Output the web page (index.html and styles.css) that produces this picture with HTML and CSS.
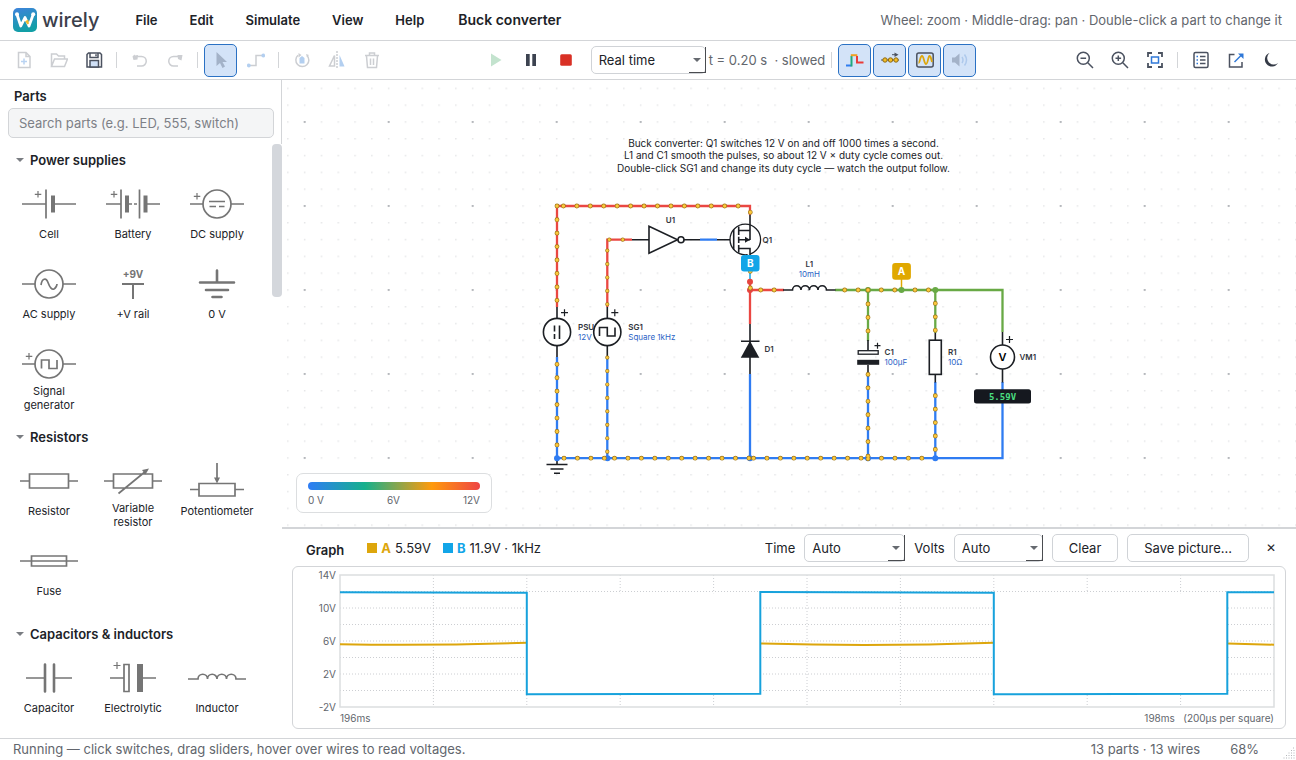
FILE: index.html
```html
<!DOCTYPE html>
<html lang="en">
<head>
<meta charset="utf-8">
<title>Buck converter - wirely</title>
<link rel="stylesheet" href="styles.css">
</head>
<body class="app">
<header class="menubar">
  <div class="brand">
    <svg class="logo" viewBox="0 0 24 24" aria-hidden="true">
      <defs><linearGradient id="lg" x1="0" y1="0" x2="0.3" y2="1"><stop offset="0" stop-color="#3f83dc"/><stop offset="1" stop-color="#129fa6"/></linearGradient></defs>
      <rect width="24" height="24" rx="5" fill="url(#lg)"/>
      <path d="M4 6.5 7.8 18 12 9.5 16 18 20.2 6.5" fill="none" stroke="#fff" stroke-width="2.8" stroke-linejoin="round" stroke-linecap="round"/>
      <circle cx="4" cy="6.3" r="2" fill="#fff"/><circle cx="20.2" cy="6.3" r="2" fill="#fff"/>
      <path d="M12.2 13.2 15.2 11.4 16 15.6 14.4 16.4z" fill="#f2b92c"/>
    </svg>
    <span class="brand-name">wirely</span>
  </div>
  <nav class="menus">
    <button class="menu">File</button><button class="menu">Edit</button><button class="menu">Simulate</button><button class="menu">View</button><button class="menu">Help</button>
  </nav>
  <h1 class="doc-title">Buck converter</h1>
  <p class="hint">Wheel: zoom · Middle-drag: pan · Double-click a part to change it</p>
</header>

<div class="toolbar" role="toolbar">
  <button class="tool dim" aria-label="New"><svg viewBox="0 0 18 18"><path d="M3.5 1.5h7.5l4 4v11h-11.5zM11 1.5v4h4"/><path class="blue" d="M9 7.5v6M6 10.5h6"/></svg></button>
  <button class="tool dim" aria-label="Open"><svg viewBox="0 0 18 18"><path d="M1.5 15.500V3h5l2 2h6v3M1.500 15.500 4.500 8h13L14.500 15.500z"/></svg></button>
  <button class="tool" aria-label="Save"><svg viewBox="0 0 18 18"><path d="M2 3.500 3.500 2h11.500l1.500 1.500v12.500H2z"/><path d="M5 2v4.500h8V2M11 3.200v2"/><path fill="#cfe0f7" d="M5 16v-6.500h8.500V16z"/></svg></button>
  <span class="sep"></span>
  <button class="tool dim" aria-label="Undo"><svg viewBox="0 0 18 18"><path d="M4.500 5.500h6a4.500 4.500 0 0 1 0 9.500H6"/><path class="solid" d="M1.500 5.500 3.500 3.500l.5 1 3-.5-.5 4.500-4 .5z"/></svg></button>
  <button class="tool dim" aria-label="Redo"><svg viewBox="0 0 18 18"><path d="M13.500 5.500h-6a4.500 4.500 0 0 0 0 9.500H12"/><path class="solid" d="M16.500 4 11.500 4l.5 4 3.500 1.500z"/></svg></button>
  <span class="sep"></span>
  <button class="tool on dim" aria-label="Select"><svg viewBox="0 0 18 18"><path class="ptr" d="M4.500 1v14l3.500-3 2.500 5 2.500-1.500-2.500-4.500h4.500z"/></svg></button>
  <button class="tool dim" aria-label="Wire"><svg viewBox="0 0 18 18"><path d="M2 14.500h7V4.500h7.500"/><circle class="bluefill" cx="1.800" cy="14.500" r="1.900"/><circle class="bluefill" cx="16.300" cy="4.500" r="1.900"/></svg></button>
  <span class="sep"></span>
  <button class="tool dim" aria-label="Rotate"><svg viewBox="0 0 18 18"><path d="M5 4.200A6.500 6.500 0 1 0 14 4.500"/><path class="solid" d="M5.500 2 8.500 4 5.500 6.500zM13 3l3 1-2 2z"/><path class="bluefill" d="M6.500 7l2.500-2 2.500 2v5.500h-5z"/></svg></button>
  <button class="tool dim" aria-label="Mirror"><svg viewBox="0 0 18 18"><path d="M6.500 4.500v10.500H1.500z"/><path stroke-dasharray="2 1" d="M9 0v18"/><path class="bluefill" d="M11.500 4v11.500h5z"/></svg></button>
  <button class="tool dim" aria-label="Delete"><svg viewBox="0 0 18 18"><path d="M2 4.500h14M6.500 4V2h5v2M3.500 5l1 11.500h9l1-11.500M7.500 7.500v6.500M10.500 7.500v6.500"/></svg></button>
  <span class="spacer"></span>
  <button class="tool" aria-label="Run"><svg viewBox="0 0 18 18"><path fill="#c3e3ce" stroke="none" d="M4 2.500v13l10.500-6.500z"/></svg></button>
  <button class="tool" aria-label="Pause"><svg viewBox="0 0 18 18"><path fill="#3c4350" stroke="none" d="M4 3h3.700v12H4zM10.300 3H14v12h-3.700z"/></svg></button>
  <button class="tool" aria-label="Stop"><svg viewBox="0 0 18 18"><rect x="3.200" y="3.200" width="11.600" height="11.600" rx="1.500" fill="#d93025" stroke="none"/></svg></button>
  <span class="select speed"><select aria-label="Speed"><option>Real time</option></select></span>
  <span class="clock">t = 0.20 s &nbsp;· slowed</span>
  <span class="sep"></span>
  <button class="tool on" aria-label="Voltage colours"><svg viewBox="0 0 18 18" class="fat"><path stroke="#2f7df0" d="M0 14.500h5.500"/><path stroke="#20a97c" d="M5.500 15.500V5"/><path stroke="#f0a020" d="M4.800 4.200h6.500"/><path stroke="#ea3c38" d="M11 5v6.500h6.500"/></svg></button>
  <button class="tool on" aria-label="Current dots"><svg viewBox="0 0 18 18"><path stroke-width="1" d="M0 9h18M11 3.700h5"/><path class="solid" d="M13.500 1.500l4 2.200-4 2.200z"/><g fill="#f5bd23" stroke="#8a6a1a" stroke-width="1"><circle cx="4" cy="9" r="2.200"/><circle cx="9.500" cy="9" r="2.200"/><circle cx="15" cy="9" r="2.200"/></g></svg></button>
  <button class="tool on" aria-label="Graph"><svg viewBox="0 0 18 18"><rect x=".8" y="2" width="16.400" height="14" rx="2"/><path stroke="#dda60c" stroke-width="1.800" d="M2.500 12C4 12 4 5 6 5s2 8 4 8 2-8 3.500-8 1.500 3 2.500 6"/></svg></button>
  <button class="tool on" aria-label="Sound"><svg viewBox="0 0 18 18"><path fill="#a3b2c8" stroke="none" d="M1 6.500h3l4.500-4v13l-4.500-4H1z"/><path class="wave" d="M11 6q2 3 0 6M13.500 3.500q4 5.500 0 11"/></svg></button>
  <span class="spacer"></span>
  <button class="tool" aria-label="Zoom out"><svg viewBox="0 0 18 18"><circle cx="7.300" cy="7.300" r="6"/><path d="M11.800 11.800 17 17M4.500 7.300h5.600"/></svg></button>
  <button class="tool" aria-label="Zoom in"><svg viewBox="0 0 18 18"><circle cx="7.300" cy="7.300" r="6"/><path d="M11.800 11.800 17 17M4.500 7.300h5.600M7.300 4.500v5.600"/></svg></button>
  <button class="tool" aria-label="Zoom to fit"><svg viewBox="0 0 18 18"><path stroke-width="1.800" d="M2 6V2h4M12 2h4v4M16 12v4h-4M6 16H2v-4"/><rect class="act" x="5.500" y="6" width="7" height="6"/></svg></button>
  <span class="sep"></span>
  <button class="tool" aria-label="Parts list"><svg viewBox="0 0 18 18"><rect x="2" y="1.500" width="14" height="15" rx="1.500"/><path class="act" d="M4.500 5.500h1.500M4.500 9h1.500M4.500 12.500h1.500"/><path d="M8 5.500h5.500M8 9h5.500M8 12.500h5.500"/></svg></button>
  <button class="tool" aria-label="Share"><svg viewBox="0 0 18 18"><path d="M7.500 3.500H2.500v12.500h12.500V11"/><path class="act" d="M7.500 11 14.500 4"/><path class="actfill" d="M11 2.500h5.500v5.500z"/></svg></button>
  <button class="tool" aria-label="Dark mode"><svg viewBox="0 0 18 18"><path fill="#343a46" stroke="none" d="M7.500 2a7 7 0 1 0 8.500 10A6.200 6.200 0 0 1 7.500 2z"/></svg></button>
</div>

<main class="work">
<aside class="sidebar">
  <div class="side-head">
    <label class="side-title" for="search">Parts</label>
    <input class="search" id="search" type="search" placeholder="Search parts (e.g. LED, 555, switch)">
  </div>
  <div class="side-scroll">
    <section class="group">
      <h2 class="group-title">Power supplies</h2>
      <div class="parts">
        <button class="part"><svg viewBox="-30 -22 60 44"><path d="M-27 0h24M-3-14.500v29M5 0h22"/><path class="plus" d="M-11-13v6.500M-14.200-9.700h6.500"/><path stroke-width="4" d="M4-8.500v17"/></svg><span>Cell</span></button>
        <button class="part"><svg viewBox="-30 -22 60 44"><path d="M-27 0h15M-12-14.500v29M-5 0h4M1 0h3M6.500-14.500v29M13 0h14"/><path class="plus" d="M-19-13v6.500M-22.200-9.700h6.500"/><path stroke-width="4" d="M-6-8.500v17M12.500-8.500v17"/></svg><span>Battery</span></button>
        <button class="part"><svg viewBox="-30 -22 60 44"><circle r="14"/><path d="M-27 0h13M14 0h13M-8-2.500h16M-7.500 2.500h6.500M2 2.500h5.500"/><path class="plus" d="M-20-11v6.500M-23.200-7.700h6.500"/></svg><span>DC supply</span></button>
        <button class="part"><svg viewBox="-30 -22 60 44"><circle r="14"/><path d="M-27 0h13M14 0h13M-8 1C-7-5.500-3-7-1-1.500S3 6 5 5 8 1 8 0"/></svg><span>AC supply</span></button>
        <button class="part"><svg viewBox="-30 -22 60 44"><text class="rail" x="0" y="-6">+9V</text><path stroke-width="2" d="M-11 0h22M0 0v15"/></svg><span>+V rail</span></button>
        <button class="part"><svg viewBox="-30 -22 60 44"><path class="heavy" d="M0-13.500V-2M-17-1.500h34M-11 6h22M-4.500 13h9"/></svg><span>0 V</span></button>
        <button class="part"><svg viewBox="-30 -22 60 44"><circle r="14"/><path d="M-27 0h13M14 0h13M-7.500 4.500v-8.500H0v8.500h8v-8.500"/><path class="plus" d="M-20-11v6.500M-23.200-7.700h6.500"/></svg><span>Signal generator</span></button>
      </div>
    </section>
    <section class="group">
      <h2 class="group-title">Resistors</h2>
      <div class="parts">
        <button class="part"><svg viewBox="-30 -22 60 44"><path d="M-29 0h9.500M19.500 0h9.500M-19.500-7h39V7h-39z"/></svg><span>Resistor</span></button>
        <button class="part"><svg viewBox="-30 -22 60 44"><path d="M-29 0h9.500M19.500 0h9.500M-19.500-7h39V7h-39zM-14.500 12.500 13-10"/><path class="tip" d="M16-12.500 12.500-6.500 9-11z"/></svg><span>Variable resistor</span></button>
        <button class="part"><svg viewBox="-30 -22 60 44"><path d="M-27 8.500h9M18 8.500h9M-18 2.500h36v12.500h-36zM0-18V0"/><path class="tip" d="M0 2.500-3-3.500h6z"/></svg><span>Potentiometer</span></button>
        <button class="part"><svg viewBox="-30 -22 60 44"><path d="M-29 0h58M-17.500-5h35V5h-35z"/></svg><span>Fuse</span></button>
      </div>
    </section>
    <section class="group">
      <h2 class="group-title">Capacitors &amp; inductors</h2>
      <div class="parts">
        <button class="part"><svg viewBox="-30 -22 60 44"><path d="M-23 0h19M5 0h18"/><path class="heavy" d="M-4-13.500v27M5-13.500v27"/></svg><span>Capacitor</span></button>
        <button class="part"><svg viewBox="-30 -22 60 44"><path d="M-23 0h14M10 0h13M-9-13.500h5v27h-5z"/><path class="plus" d="M-16-16v7M-19.500-12.500h7"/><path class="tip" d="M4-14h6v28H4z"/></svg><span>Electrolytic</span></button>
        <button class="part"><svg viewBox="-30 -22 60 44"><path d="M-29 1h10a4.750 4.750 0 0 1 9.500 0a4.750 4.750 0 0 1 9.500 0a4.750 4.750 0 0 1 9.500 0a4.750 4.750 0 0 1 9.500 0h10"/></svg><span>Inductor</span></button>
      </div>
    </section>
    <div class="thumb"></div>
  </div>
</aside>

<div class="stage">
<div class="canvas">
<svg class="schematic" role="img" aria-label="Buck converter circuit">
  <defs>
    <pattern id="minor" x="287.100" y="87.600" width="16.800" height="16.800" patternUnits="userSpaceOnUse"><rect x=".2" y=".2" width="1.200" height="1.200" fill="#d6d8db"/></pattern>
    <pattern id="major" x="303.700" y="121" width="84" height="84" patternUnits="userSpaceOnUse"><rect width="1.900" height="1.900" fill="#b3b6ba"/></pattern>
    <g id="flow">
      <path d="M563.400 206H740M557 206v.01M750.300 212.300v.01M557 219.700V301M557 364.300V446M564 458.200H605M614.500 458.200H750M753.500 458.200H862M868 456.200v.01M868 458.800v.01M881.500 458.200H923M760.700 290H776M844.700 290H860M868 290v.01M881.300 290H896M915 290H930M750.300 271.300v.01M750.300 288v.01M868 304V332M868 374.400V442.500M935.300 303.400V331M935.300 395.700V450.500"/>
    </g>
    <g id="flow2"><path d="M609.300 239.700H624M607.300 250.600V305.500M607.300 357.600V452.500"/></g>
  </defs>
  <g transform="translate(-282 -80)">
    <rect x="282" y="80" width="4000" height="3000" fill="url(#minor)"/>
    <rect x="282" y="80" width="4000" height="3000" fill="url(#major)"/>
    <g class="note">
      <text x="783.500" y="147">Buck converter: Q1 switches 12 V on and off 1000 times a second.</text>
      <text x="783.500" y="159">L1 and C1 smooth the pulses, so about 12 V × duty cycle comes out.</text>
      <text x="783.500" y="172">Double-click SG1 and change its duty cycle — watch the output follow.</text>
    </g>
    <g class="wire">
      <path class="red" d="M557 307V206H750V215M607.300 307V239.700H632M750 282V324M750 290H784"/>
      <path class="blu" d="M557 357V458.200H1002.500V382M607.300 357V458M700 239.700H717M750 374V458M868 373V458M935.300 382V458"/>
      <path class="grn" d="M835 290H1002.500V332M868 290V341M935.300 290V333"/>
      <path stroke="#12a5e8" stroke-width="1.500" d="M750 271V281"/>
      <path stroke="#e0a800" stroke-width="1.500" d="M901.500 279V290"/>
    </g>
    <text class="ref" x="578" y="330">PSU</text><text class="val" x="578" y="340">12V</text>
    <g class="sym">
      <path d="M557 307V318M557 346V357M607.300 307V318M607.300 346V357M632 239.700H649M684 239.700H700M717 239.700H733M557 458V464"/>
      <circle cx="557" cy="332" r="13.600"/><circle cx="607.300" cy="332" r="13.600"/>
      <path d="M554.500 325.500v6M554.500 334v5M559.500 325.500V339"/>
      <path class="plus" d="M561 312.700h7M564.500 309.200v7M611.300 312.700h7M614.800 309.200v7M874.500 345.700h6M877.500 342.700v6M1006 339.500h7M1009.500 336v7"/>
      <path d="M599.500 336V327.500H607.300V336H615V327.500"/>
      <path d="M649 226.200V253.200L677.500 239.700z"/><circle cx="681" cy="239.700" r="3"/>
      <circle cx="745.300" cy="239.500" r="15.300" stroke-width="1.300"/>
      <path d="M733.700 229.500V250M738.700 226.500V235M738.700 236.700V243M738.700 245V252.700M738.700 230.500H750M738.700 239.700H750M750 215V240M738.700 248.500H750V256"/>
      <path fill="#1c1f24" stroke="none" d="M745 236.700l5 3-5 3z"/>
      <path fill="none" d="M783 290h9.500a4.250 4.250 0 0 1 8.500 0a4.250 4.250 0 0 1 8.500 0a4.250 4.250 0 0 1 8.500 0a4.250 4.250 0 0 1 8.500 0h9"/>
      <path d="M750 324V374M741 341.300h18.500"/><path class="ink" stroke="none" d="M750 341 740.800 357.800h18.500z"/>
      <path d="M868 340v10M868 365v8.500"/><rect x="858.200" y="350.700" width="20" height="3.500" stroke-width="1.300"/><rect class="ink" stroke="none" x="857.200" y="359.800" width="22" height="5"/>
      <path d="M935.300 333v7M935.300 375v7.500"/><rect x="929.300" y="340.200" width="12" height="34.200"/>
      <path d="M1002.500 332v13M1002.500 369v13.500"/><circle cx="1002.500" cy="357" r="12"/>
      <path d="M546.500 464.500h21M550.500 469h13M554 473.300h6"/>
    </g>
    <g class="joint">
      <g fill="#e5453f"><circle cx="750" cy="281.700" r="3"/><circle cx="750" cy="290" r="3"/></g>
      <g fill="#68a945"><circle cx="868" cy="290" r="3"/><circle cx="901.500" cy="290" r="3"/><circle cx="935.300" cy="290" r="3"/></g>
      <g fill="#2f7cf2"><circle cx="557" cy="458.200" r="3"/><circle cx="607.500" cy="458.200" r="3"/><circle cx="750" cy="458.200" r="3"/><circle cx="868" cy="458.200" r="3"/><circle cx="935.300" cy="458.200" r="3"/></g>
    </g>
    <use href="#flow" class="dot-edge"/><use href="#flow" class="dot-fill"/>
    <use href="#flow2" class="dot-edge small"/><use href="#flow2" class="dot-fill small"/>
    <text class="ref mid" x="670.500" y="223">U1</text>
    <text class="ref" x="762.500" y="243">Q1</text>
    <text class="ref mid" x="809.300" y="267">L1</text><text class="val mid" x="809.300" y="277">10mH</text>
    <text class="ref" x="628.300" y="330">SG1</text><text class="val" x="628.300" y="340">Square 1kHz</text>
    <text class="ref" x="764.500" y="352">D1</text>
    <text class="ref" x="884.500" y="355">C1</text><text class="val" x="884.500" y="365">100µF</text>
    <text class="ref" x="948" y="355">R1</text><text class="val" x="948" y="365">10Ω</text>
    <text class="ref" x="1019.500" y="360">VM1</text>
    <text class="meter" x="1002.500" y="361">V</text>
    <rect x="974" y="389.300" width="57" height="14.200" rx="2.500" fill="#15181f"/><text class="readout" x="1002.500" y="400">5.59V</text>
    <rect x="741" y="255" width="18.500" height="16.500" rx="3" fill="#12a5e8"/><text class="probe" x="750.200" y="267">B</text>
    <rect x="892.200" y="263" width="18.700" height="16.700" rx="3" fill="#e0a800"/><text class="probe" x="901.500" y="275">A</text>
  </g>
</svg>
<div class="scale"><div class="scale-bar"></div><div class="scale-labels"><span>0 V</span><span>6V</span><span>12V</span></div></div>
</div>

<section class="dock">
  <div class="dock-head">
    <h2 class="dock-title">Graph</h2>
    <span class="key key-a"><i></i><b>A</b> 5.59V</span>
    <span class="key key-b"><i></i><b>B</b> 11.9V · 1kHz</span>
    <div class="controls">
      <label for="time">Time</label><span class="select time"><select id="time"><option>Auto</option></select></span>
      <label for="volts">Volts</label><span class="select volts"><select id="volts"><option>Auto</option></select></span>
      <button class="btn">Clear</button><button class="btn">Save picture...</button><button class="close" aria-label="Close graph">✕</button>
    </div>
  </div>
  <div class="chart">
    <div class="y-axis"><span>14V</span><span>10V</span><span>6V</span><span>2V</span><span>-2V</span></div>
    <svg class="plot" viewBox="0 0 1000 160" preserveAspectRatio="none" role="img" aria-label="Probe voltages over time">
      <path class="grid" d="M100 0V160M200 0V160M300 0V160M400 0V160M500 0V160M600 0V160M700 0V160M800 0V160M900 0V160M0 20H1000M0 40H1000M0 60H1000M0 80H1000M0 100H1000M0 120H1000M0 140H1000"/>
      <path class="frame" d="M0 0H1000V160H0z"/>
      <path fill="#fff" d="M200 22H450V144H200zM700 22H950V144H700z"/>
      <path class="trace-a" d="M0 84Q100 86 200 82M450 83Q575 87 700 82M950 83L1000 84.500"/>
      <path class="trace-b" d="M0 21 200 21.500V144.500L450 144V20.500L700 21.500V144.500L950 144V21H1000"/>
    </svg>
    <div class="x-axis"><span>196ms</span><span>198ms &nbsp; (200µs per square)</span></div>
  </div>
</section>
</div>
</main>

<footer class="status"><span>Running — click switches, drag sliders, hover over wires to read voltages.</span><span class="count">13 parts · 13 wires</span><span>68%</span>
  <svg class="grip" viewBox="0 0 12 12" aria-hidden="true"><path d="M10 1h1M8 3.500h1M10.500 3.500h1M5.500 6h1M8 6h1M10.500 6h1M3 8.500h1M5.500 8.500h1M8 8.500h1M10.500 8.500h1M.5 11h1M3 11h1M5.500 11h1M8 11h1M10.500 11h1"/></svg>
</footer>
</body>
</html>
```
FILE: styles.css
```css
* { box-sizing: border-box; }
body, h1, h2, p { margin: 0; }
button, input, select { font: inherit; color: inherit; }
button { padding: 0; border: 0; background: none; }
svg { display: block; }

.app {
  height: 100vh;
  display: flex;
  flex-direction: column;
  overflow: hidden;
  background: #fff;
  color: #202227;
  font: 13px/16px Inter, "Liberation Sans", sans-serif;
}

/* Menu bar */
.menubar { flex: none; height: 41px; display: flex; align-items: center; padding: 0 14px 0 13px; border-bottom: 1px solid #d3d5d8; }
.brand { display: flex; align-items: center; gap: 5px; }
.logo { width: 24px; height: 24px; }
.brand-name { font-size: 20px; line-height: 24px; font-weight: 500; color: #3b404b; }
.menus { display: flex; margin-left: 20px; }
.menu { padding: 4px 16px; font-weight: 600; }
.doc-title { margin-left: 18px; font-size: 14px; font-weight: 600; }
.hint { margin-left: auto; color: #62666d; }

/* Toolbar */
.toolbar { flex: none; height: 39px; display: flex; align-items: center; gap: 2px; padding: 0 9px 0 7px; border-bottom: 1px solid #d3d5d8; }
.tool { flex: none; width: 33px; height: 33px; display: grid; place-items: center; border: 1px solid transparent; border-radius: 5px; }
.tool svg { width: 18px; height: 18px; fill: none; stroke: #4b5260; stroke-width: 1.5; }
.tool .solid { fill: #4b5260; stroke: none; }
.tool .act { stroke: #2f78d8; }
.tool .actfill { fill: #2f78d8; stroke: none; }
.tool.dim svg { stroke: #ccced2; }
.tool.dim .solid { fill: #ccced2; stroke: none; }
.tool.dim .blue { stroke: #b9d3f2; }
.tool .bluefill { fill: #b3cff0; stroke: none; }
.tool .ptr { fill: #a3b2c8; stroke: none; }
.tool .wave { stroke: #aec9ec; }
.tool .fat { stroke-width: 2; }
.tool.on { background: #d3e3f8; border-color: #2a71c4; }
.sep { flex: none; width: 1px; height: 16px; margin: 0 4px; background: #d3d5d8; }
.spacer { flex: 1; }
.clock { margin-left: 1px; color: #62666d; white-space: nowrap; }

.select { position: relative; display: inline-flex; height: 28px; }
.select select { width: 100%; height: 100%; padding: 0 7px; border: 1px solid #d0d3d7; border-radius: 5px; background: #fff; appearance: none; }
.select::before { content: ""; position: absolute; right: 5px; top: 12px; border: 4px solid transparent; border-top-color: #666a70; border-bottom: 0; pointer-events: none; }
.select::after { content: ""; position: absolute; right: 0; top: 1px; width: 16px; bottom: 1px; border: solid #4a4c50; border-width: 0 1px 1px 0; pointer-events: none; }
.speed { width: 115px; margin-left: 6px; }
.time { width: 101px; }
.volts { width: 89px; }

/* Sidebar */
.work { flex: 1; min-height: 0; display: flex; }
.sidebar { flex: none; width: 282px; display: flex; flex-direction: column; }
.side-head { display: flex; flex-direction: column; height: 64px; padding: 8px 7px 0 8px; border-right: 1px solid #d3d5d8; }
.side-title { padding: 0 6px; margin-bottom: 4px; font-weight: 600; }
.search { width: 100%; height: 30px; padding: 0 10px; border: 1px solid #d3d5d8; border-radius: 5px; background: #f4f5f6; appearance: none; }
.search::placeholder { color: #7d8086; opacity: 1; }
.side-scroll { position: relative; flex: 1; min-height: 0; overflow: hidden; }
.thumb { position: absolute; right: 0; top: 0; width: 10px; height: 153px; border-radius: 4px; background: #d4d7dc; }
.group-title { display: flex; align-items: center; gap: 6px; height: 32px; margin-bottom: 5px; padding-left: 16px; font-size: 13px; font-weight: 600; }
.group-title::before { content: ""; border: 4px solid transparent; border-top-color: #7a7d82; border-bottom: 0; }
.parts { display: grid; grid-template-columns: repeat(3, 84px); grid-auto-rows: 80px; padding-left: 7px; }
.part { display: flex; flex-direction: column; align-items: center; padding-top: 1px; font-size: 11px; line-height: 14px; }
.part svg { width: 60px; height: 44px; margin-bottom: -2px; fill: none; stroke: #757575; stroke-width: 1.7; }
.part .plus { stroke-width: 1.2; }
.part .heavy { stroke-width: 2.6; stroke-linecap: round; }
.part .tip, .part .rail { fill: #757575; stroke: none; }
.part .rail { font-size: 10px; font-weight: 700; text-anchor: middle; }
.part span { display: flex; align-items: center; justify-content: center; min-height: 20px; max-width: 80px; }

/* Schematic */
.stage { flex: 1; min-width: 0; display: flex; flex-direction: column; }
.canvas { position: relative; flex: 1; min-height: 0; }
.schematic { position: absolute; inset: 0; width: 100%; height: 100%; }
.note { font-size: 10px; text-anchor: middle; fill: #202227; }
.wire { fill: none; stroke-width: 2.3; }
.red { stroke: #ea4742; }
.blu { stroke: #2f7cf2; }
.grn { stroke: #68a945; }
.sym { fill: #fff; stroke: #1c1f24; stroke-width: 1.6; }
.sym .plus { stroke-width: 1.2; }
.sym .ink { fill: #1c1f24; }
.dot-edge, .dot-fill { fill: none; stroke-linecap: round; stroke-dasharray: 0 13.44; }
.dot-edge { stroke: #a0761a; stroke-width: 4.8; }
.dot-fill { stroke: #fbc93d; stroke-width: 3.4; }
.dot-edge.small { stroke-width: 4.2; }
.dot-fill.small { stroke-width: 2.8; }
.ref { font-size: 8px; font-weight: 600; fill: #33373e; }
.val { font-size: 8px; fill: #2b63c6; }
.mid, .meter, .readout, .probe { text-anchor: middle; }
.meter { font-size: 11px; font-weight: 600; }
.readout { font: bold 9px "DejaVu Sans Mono", monospace; fill: #4ade80; }
.probe { font-size: 10px; font-weight: 700; fill: #fff; }

.scale { position: absolute; left: 14px; bottom: 14px; width: 196px; height: 40px; padding: 8px 11px; border: 1px solid #dcdee0; border-radius: 7px; background: #fff; }
.scale-bar { height: 8px; border-radius: 4px; background: linear-gradient(90deg, #2f7df6, #16b08c 33%, #ff9a0c 72%, #ee4444); }
.scale-labels { display: flex; justify-content: space-between; margin-top: 4px; font-size: 10px; line-height: 12px; color: #62666d; }

/* Graph dock */
.dock { flex: none; padding: 4px 10px 9px; border-top: 2px solid #d3d5d8; }
.dock-head { display: flex; align-items: center; height: 30px; margin-bottom: 3px; padding-left: 14px; }
.dock-title { margin-right: 23px; padding-top: 3px; font-size: 13px; font-weight: 600; }
.key { display: flex; align-items: center; gap: 4px; margin-right: 12px; }
.key i { width: 10px; height: 10px; background: currentColor; }
.key-a i, .key-a b { color: #dda60c; }
.key-b i, .key-b b { color: #12a5e8; }
.controls { margin-left: auto; display: flex; align-items: center; gap: 9px; padding-right: 2px; }
.btn { height: 28px; padding: 0 16px; border: 1px solid #d0d3d7; border-radius: 5px; }
.close { width: 26px; height: 26px; font-size: 12px; }
.chart { display: grid; grid-template: 132px 17px / 36px 1fr; column-gap: 11px; padding: 8px 11px 4px 0; border: 1px solid #d3d5d8; border-radius: 6px; color: #62666d; font-size: 10px; line-height: 12px; }
.y-axis { display: flex; flex-direction: column; justify-content: space-between; align-items: flex-end; margin: -6px -7px -6px 0; }
.plot { width: 100%; height: 132px; overflow: visible; }
.plot path { vector-effect: non-scaling-stroke; }
.grid { fill: none; stroke: #ccced2; stroke-dasharray: 1 2; }
.frame { fill: none; stroke: #dcdee0; stroke-width: 1.5; }
.trace-a, .trace-b { fill: none; stroke-width: 2; }
.trace-a { stroke: #dda60c; }
.trace-b { stroke: #17a2dc; }
.x-axis { grid-column: 2; display: flex; justify-content: space-between; padding-top: 5px; }

/* Status bar */
.status { position: relative; flex: none; height: 22px; display: flex; align-items: center; gap: 30px; padding: 0 37px 2px 13px; border-top: 1px solid #d3d5d8; color: #62666d; }
.count { margin-left: auto; }
.grip { position: absolute; right: 1px; bottom: 1px; width: 12px; height: 12px; stroke: #b3b6ba; fill: none; }
```
